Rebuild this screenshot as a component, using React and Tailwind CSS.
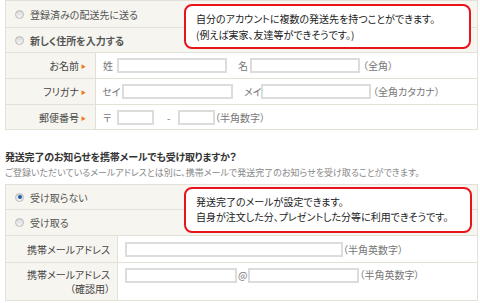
import React from "react";

const font = {
  fontFamily: '"Noto Sans CJK JP", "Noto Sans", sans-serif',
};

function Radio({ checked }) {
  return (
    <span className="relative inline-block w-[9px] h-[9px] rounded-full border border-[#b9b9b9] bg-gradient-to-b from-[#d8d8d8] to-[#f6f6f6] shrink-0">
      {checked && (
        <span className="absolute left-[1.5px] top-[1.5px] w-[4px] h-[4px] rounded-full bg-[#1f5fa8]" />
      )}
    </span>
  );
}

function Input({ w }) {
  return <span className={`inline-block shrink-0 h-[15px] border-2 border-[#dcdcdc] bg-white ${w}`} />;
}

function Arrow() {
  return <span className="text-[#f07a1a] text-[5px] ml-[2px] leading-none">▶</span>;
}

export default function App() {
  return (
    <div
      className="w-[480px] h-[303px] bg-white overflow-hidden relative text-[10px] text-[#444] whitespace-nowrap [font-feature-settings:'palt']"
      style={font}
    >
      {/* Section 1 */}
      <div className="relative ml-[5px] mr-[2px] border-l border-t border-r border-[#e3e0d8]">
        <div className="h-[27px] flex items-center gap-[6px] pl-[9px] bg-[#f7f5f0] border-b border-[#e3e0d8]">
          <Radio />
          <span className="text-[#555]">登録済みの配送先に送る</span>
        </div>
        <div className="h-[25px] flex items-center gap-[6px] pl-[9px] bg-[#f7f5f0] border-b border-[#e3e0d8]">
          <Radio />
          <span className="text-[#555] font-bold">新しく住所を入力する</span>
        </div>
        <div className="h-[26px] flex border-b border-[#e3e0d8]">
          <div className="w-[90px] shrink-0 flex items-center justify-end pr-[9px] bg-[#f7f5f0] border-r border-[#e3e0d8] text-[#444]">
            お名前<Arrow />
          </div>
          <div className="flex items-center pl-[7px] text-[#777]">
            <span className="w-[14px] shrink-0">姓</span>
            <Input w="w-[110px]" />
            <span className="ml-[11px] w-[12px] shrink-0">名</span>
            <Input w="w-[110px]" />
            <span className="ml-[3px]">（全角）</span>
          </div>
        </div>
        <div className="h-[26px] flex border-b border-[#e3e0d8]">
          <div className="w-[90px] shrink-0 flex items-center justify-end pr-[9px] bg-[#f7f5f0] border-r border-[#e3e0d8] text-[#444]">
            フリガナ<Arrow />
          </div>
          <div className="flex items-center pl-[6px] text-[#777]">
            <span className="w-[20px] shrink-0">セイ</span>
            <Input w="w-[111px]" />
            <span className="ml-[11px] w-[17px] shrink-0">メイ</span>
            <Input w="w-[110px]" />
            <span className="ml-[2px]">（全角カタカナ）</span>
          </div>
        </div>
        <div className="h-[25px] flex border-b border-[#e3e0d8]">
          <div className="w-[90px] shrink-0 flex items-center justify-end pr-[9px] bg-[#f7f5f0] border-r border-[#e3e0d8] text-[#444]">
            郵便番号<Arrow />
          </div>
          <div className="flex items-center pl-[7px] text-[#777]">
            <span className="w-[14px] shrink-0">〒</span>
            <Input w="w-[37px]" />
            <span className="ml-[13px] w-[11px] shrink-0">-</span>
            <Input w="w-[37px]" />
            <span>（半角数字）</span>
          </div>
        </div>
        <div className="absolute left-[178px] top-[3px] w-[287px] h-[45px] rounded-[8px] border-2 border-[#e8141c] bg-white px-[10px] pt-[5px] text-[10px] leading-[16px] text-[#222]">
          <div>自分のアカウントに複数の発送先を持つことができます。</div>
          <div>(例えば実家、友達等ができそうです。)</div>
        </div>
      </div>

      {/* Section 2 */}
      <div className="mt-[20px] ml-[5px] font-bold text-[#333] leading-[14px] tracking-[-0.2px]">
        発送完了のお知らせを携帯メールでも受け取りますか？
      </div>
      <div className="mt-[2px] ml-[5px] text-[#888] text-[9px] leading-[14px]">
        ご登録いただいているメールアドレスとは別に、携帯メールで発送完了のお知らせを受け取ることができます。
      </div>
      <div className="relative mt-[4px] ml-[5px] mr-[2px] border-l border-t border-r border-[#e3e0d8]">
        <div className="h-[25px] flex items-center gap-[6px] pl-[9px] bg-[#f7f5f0] border-b border-[#e3e0d8]">
          <Radio checked />
          <span className="text-[#555]">受け取らない</span>
        </div>
        <div className="h-[26px] flex items-center gap-[6px] pl-[9px] bg-[#f7f5f0] border-b border-[#e3e0d8]">
          <Radio />
          <span className="text-[#555]">受け取る</span>
        </div>
        <div className="h-[27px] flex border-b border-[#e3e0d8]">
          <div className="w-[112px] shrink-0 flex items-center justify-end pr-[7px] bg-[#f7f5f0] border-r border-[#e3e0d8] text-[#444]">
            携帯メールアドレス
          </div>
          <div className="flex items-center pl-[7px] text-[#777]">
            <Input w="w-[218px]" />
            <span>（半角英数字）</span>
          </div>
        </div>
        <div className="h-[38px] flex border-b border-[#e3e0d8]">
          <div className="w-[112px] shrink-0 flex flex-col items-end justify-center pr-[7px] bg-[#f7f5f0] border-r border-[#e3e0d8] text-[#444] leading-[14px]">
            <span>携帯メールアドレス</span>
            <span>（確認用）</span>
          </div>
          <div className="flex items-start pt-[5px] pl-[7px] text-[#777]">
            <Input w="w-[112px]" />
            <span className="mx-[1px] leading-[14px]">@</span>
            <Input w="w-[111px]" />
            <span className="leading-[14px]">（半角英数字）</span>
          </div>
        </div>
        <div className="absolute left-[178px] top-[2px] w-[288px] h-[46px] rounded-[8px] border-2 border-[#e8141c] bg-white px-[10px] pt-[5px] text-[10px] leading-[15px] text-[#222]">
          <div>発送完了のメールが設定できます。</div>
          <div>自身が注文した分、プレゼントした分等に利用できそうです。</div>
        </div>
      </div>
    </div>
  );
}
